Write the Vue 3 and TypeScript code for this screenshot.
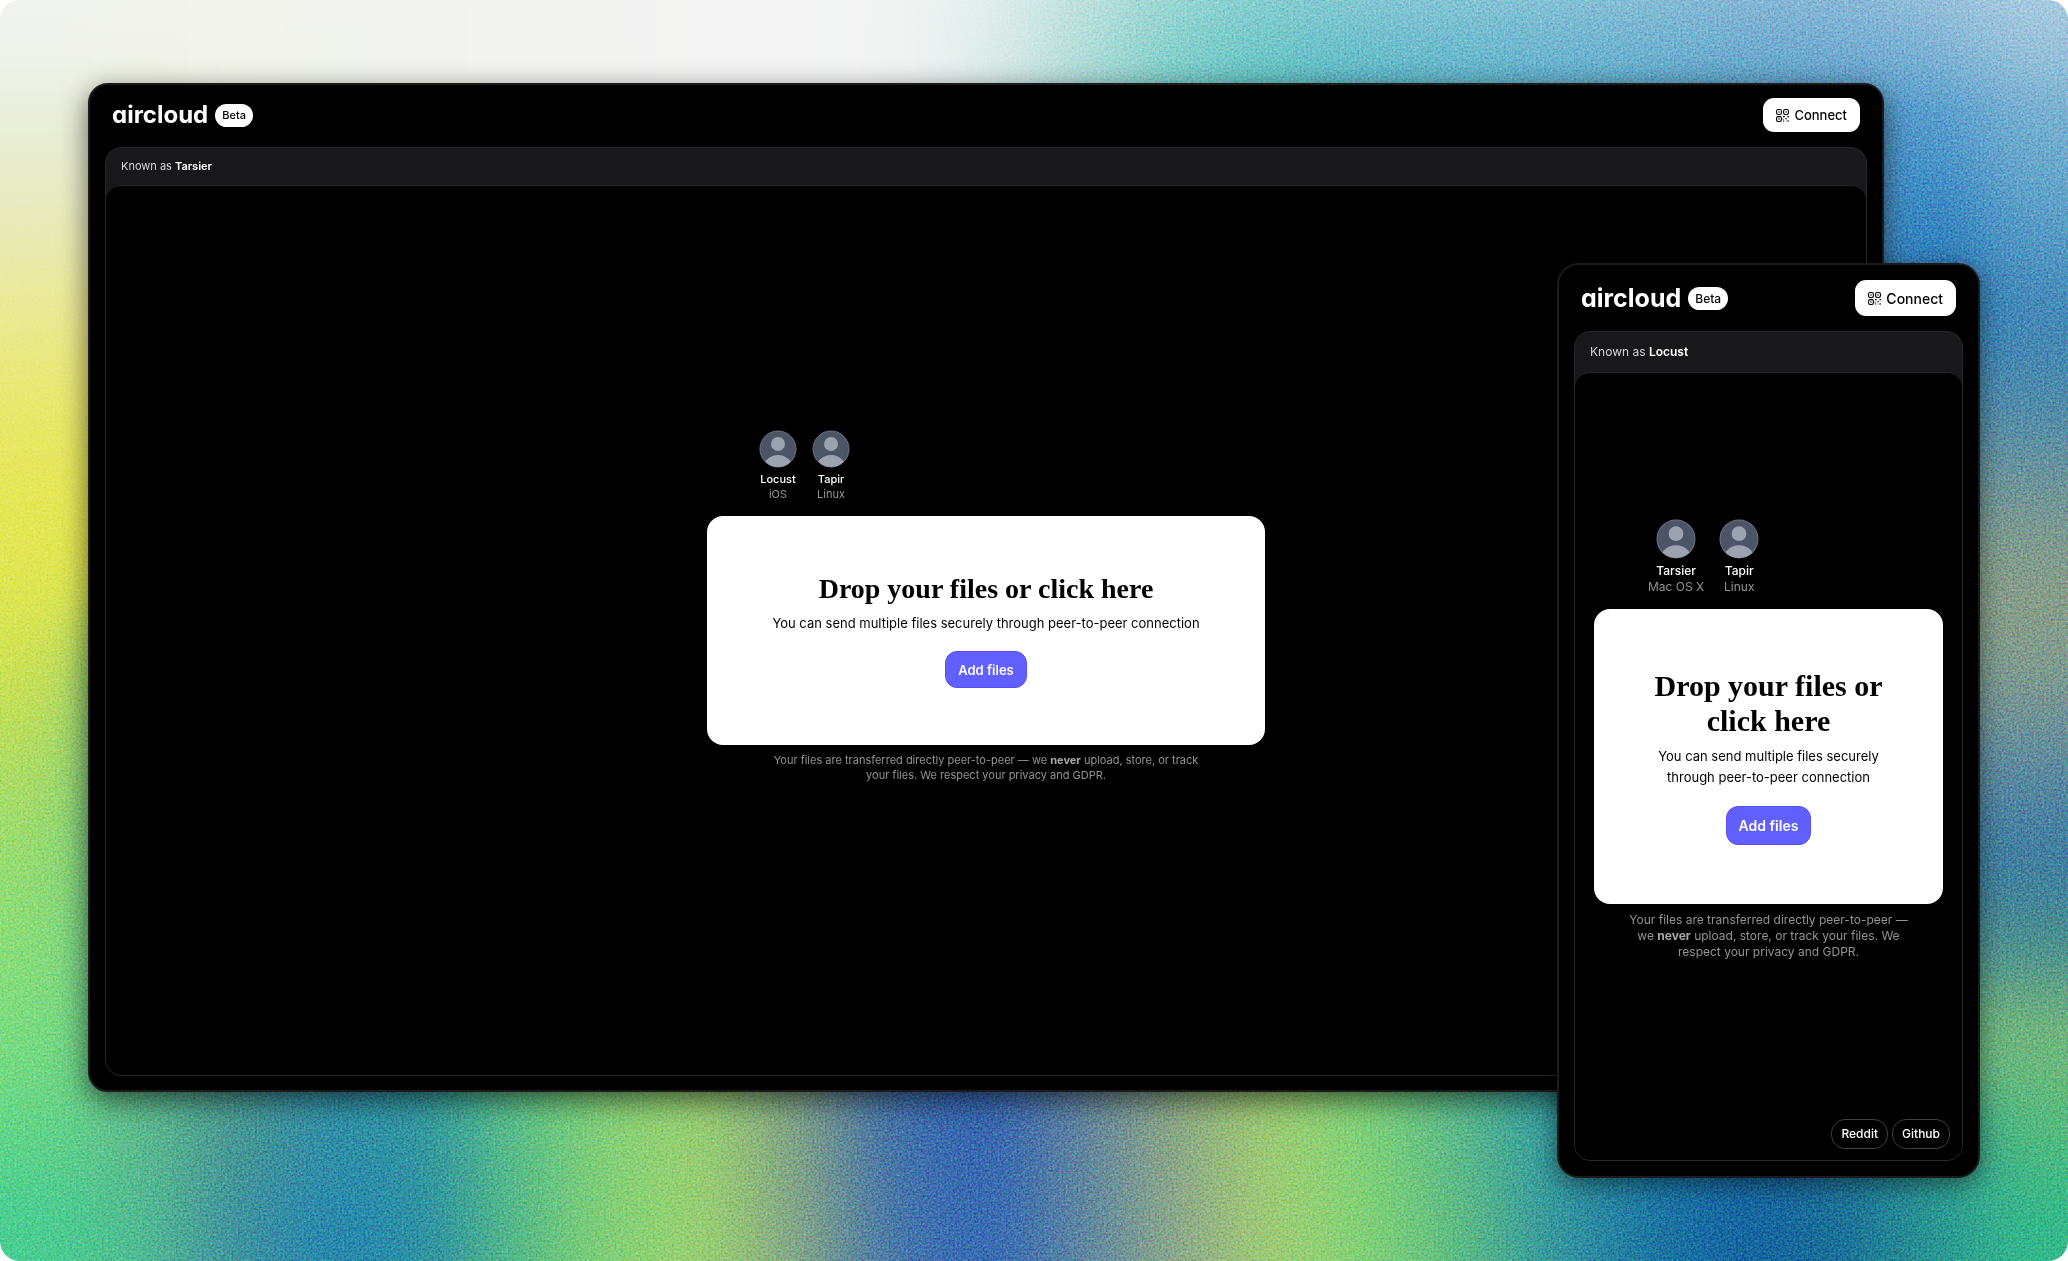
<script setup lang="ts">
interface Peer {
  name: string
  os: string
}

interface AppWindow {
  kind: 'wide' | 'compact'
  alias: string
  peers: Peer[]
  links: string[]
}

interface Cell {
  x: number
  y: number
  width: number
  height: number
  fill: string
}

const windows: AppWindow[] = [
  {
    kind: 'wide',
    alias: 'Tarsier',
    peers: [
      { name: 'Locust', os: 'iOS' },
      { name: 'Tapir', os: 'Linux' },
    ],
    links: [],
  },
  {
    kind: 'compact',
    alias: 'Locust',
    peers: [
      { name: 'Tarsier', os: 'Mac OS X' },
      { name: 'Tapir', os: 'Linux' },
    ],
    links: ['Reddit', 'Github'],
  },
]

/* Wallpaper: a coarse colour mesh that is blurred into a smooth gradient. */
const cols = 22
const rows = 14
const cw = 94
const ch = 90

const top = ['#eff2ec', '#f1f3ea', '#f2f4ea', '#f1f3ec', '#f2f3ee', '#f3f4f0', '#f3f3f2', '#f4f4f4', '#f4f4f4', '#f2f4f3', '#dcebe9', '#a6d8d4', '#6cc8c4', '#50bcc0', '#4fb2c4', '#50aec8', '#52a8c9', '#52a4c9', '#529bc8', '#559bca', '#64a4cf', '#86b8d6']
const bottomA = ['#62d588', '#5bb98e', '#45948f', '#2b8ba8', '#2a94a0', '#58c088', '#84d076', '#98cf70', '#7c9c86', '#3c6cac', '#2c5eb2', '#5d80a0', '#8aa686', '#9ecb70', '#7cd278', '#58b88a', '#309aa0', '#1878a4', '#14689f', '#1a6c9c', '#2a9898', '#50b97c']
const bottomB = ['#44cd92', '#4fbb92', '#3a8fa0', '#2184b0', '#268ca6', '#52ba88', '#82d076', '#99d070', '#82a488', '#4272ac', '#2c64b6', '#5a82a4', '#8ca68c', '#a0cc74', '#80d276', '#5abc84', '#3096a0', '#1874a4', '#105fa2', '#146898', '#239094', '#2fb88c']
const left = ['#eff2ec', '#e8edd6', '#e9ebba', '#eae992', '#e8e86c', '#e5e755', '#dfe64f', '#cce152', '#aedc62', '#96dc70', '#88dd79', '#78dc80', '#62d588', '#44cd92']
const right = ['#86b8d6', '#70acd0', '#559cc8', '#3c84b8', '#4a88ac', '#6f9498', '#869c88', '#7d9890', '#5a88a0', '#3878a4', '#468c90', '#74b87c', '#50b97c', '#2fb88c']
const right2 = ['#64a4cf', '#4694cc', '#2378bf', '#1e70b4']

function colour(c: number, r: number): string {
  if (r === 0) return top[c]
  if (r === rows - 1) return bottomB[c]
  if (r === rows - 2) return bottomA[c]
  if (c === 0) return left[r]
  if (c === cols - 1) return right[r]
  if (c === cols - 2) return right2[r] ?? right[r]
  if (r > 6) return bottomA[c]
  return c === 1 ? left[r] : top[c]
}

const cells: Cell[] = []
for (let r = 0; r < rows; r++) {
  for (let c = 0; c < cols; c++) {
    const x0 = c === 0 ? -300 : c * cw
    const x1 = c === cols - 1 ? cols * cw + 300 : (c + 1) * cw + 1
    const y0 = r === 0 ? -300 : r * ch
    const y1 = r === rows - 1 ? rows * ch + 300 : (r + 1) * ch + 1
    cells.push({ x: x0, y: y0, width: x1 - x0, height: y1 - y0, fill: colour(c, r) })
  }
}
</script>

<template>
  <div class="stage">
    <svg class="wallpaper" viewBox="0 0 2068 1261" preserveAspectRatio="none" aria-hidden="true">
      <defs>
        <filter id="melt" filterUnits="userSpaceOnUse" x="-200" y="-200" width="2468" height="1661" color-interpolation-filters="sRGB">
          <feGaussianBlur stdDeviation="40" />
        </filter>
        <filter id="grain" x="0" y="0" width="100%" height="100%" color-interpolation-filters="sRGB">
          <feTurbulence type="fractalNoise" baseFrequency="0.47" numOctaves="3" seed="11" />
          <feColorMatrix values="1.8 0 0 0 -0.36  0 1.8 0 0 -0.34  0 0 1.8 0 -0.4  0 0 0 0 1" />
        </filter>
        <linearGradient id="calm" x1="0" y1="0" x2="1" y2="0">
          <stop offset="0" stop-color="#000" />
          <stop offset="0.42" stop-color="#000" />
          <stop offset="0.54" stop-color="#fff" />
        </linearGradient>
        <linearGradient id="low" x1="0" y1="0" x2="0" y2="1">
          <stop offset="0.1" stop-color="#fff" stop-opacity="0" />
          <stop offset="0.5" stop-color="#fff" />
        </linearGradient>
        <linearGradient id="sheen" x1="0" y1="0" x2="0" y2="1">
          <stop offset="0" stop-color="#f4f4f4" stop-opacity="0.3" />
          <stop offset="1" stop-color="#f4f4f4" stop-opacity="0" />
        </linearGradient>
        <mask id="grain-area">
          <rect width="2068" height="1261" fill="url(#calm)" />
          <rect width="2068" height="1261" fill="url(#low)" />
        </mask>
      </defs>
      <g filter="url(#melt)">
        <rect v-for="(cell, i) in cells" :key="i" v-bind="cell" />
      </g>
      <rect width="2068" height="110" fill="url(#sheen)" />
      <g mask="url(#grain-area)" class="grain">
        <rect width="2068" height="1261" filter="url(#grain)" />
      </g>
    </svg>

    <section v-for="win in windows" :key="win.kind" class="window" :class="win.kind">
      <header class="bar">
        <span class="logo">aircloud</span>
        <span class="badge">Beta</span>
        <button type="button" class="connect">
          <svg class="qr" viewBox="0 0 24 24" fill="none" stroke="currentColor" stroke-width="2" aria-hidden="true">
            <rect x="1" y="1" width="9" height="9" rx="3" />
            <rect x="14" y="1" width="9" height="9" rx="3" />
            <rect x="1" y="14" width="9" height="9" rx="3" />
            <path d="M4 5.500h3M17 5.500h3M4 18.500h3M13 14h3M21 14h3M17 18h3M13 22h2M13 18v2M21 22h3M18 22h1" />
          </svg>
          Connect
        </button>
      </header>

      <div class="panel">
        <p class="alias">Known as <strong>{{ win.alias }}</strong></p>
        <main class="content">
          <div class="center">
            <ul class="peers">
              <li v-for="peer in win.peers" :key="peer.name" class="peer">
                <svg class="avatar" viewBox="0 0 38 38" aria-hidden="true">
                  <clipPath :id="`disc-${win.kind}-${peer.name}`"><circle cx="19" cy="19" r="18" /></clipPath>
                  <circle cx="19" cy="19" r="18" fill="#4b5566" stroke="#6a7385" stroke-width="1" />
                  <circle cx="19" cy="14" r="7" fill="#9ca3b0" />
                  <circle cx="19" cy="41" r="16" fill="#9ca3b0" :clip-path="`url(#disc-${win.kind}-${peer.name})`" />
                </svg>
                <span class="name">{{ peer.name }}</span>
                <span class="os">{{ peer.os }}</span>
              </li>
            </ul>
            <div class="card">
              <h1 class="title">Drop your files or click here</h1>
              <p class="hint">You can send multiple files securely through peer-to-peer connection</p>
              <button type="button" class="add">Add files</button>
            </div>
            <p class="note">
              Your files are transferred directly peer-to-peer — we <strong>never</strong> upload, store, or track your
              files. We respect your privacy and GDPR.
            </p>
          </div>
          <nav v-if="win.links.length" class="links">
            <a v-for="link in win.links" :key="link" class="link" href="#">{{ link }}</a>
          </nav>
        </main>
      </div>
    </section>
  </div>
</template>

<style>
body {
  margin: 0;
  background: #fff;
}
</style>

<style scoped>
.stage {
  position: relative;
  min-height: 100vh;
  overflow: hidden;
  border-radius: 20px;
  font-family: Inter, "Liberation Sans", sans-serif;
  color: #fff;
}

.wallpaper {
  position: absolute;
  inset: 0;
  width: 100%;
  height: 100%;
}

.grain {
  mix-blend-mode: soft-light;
  opacity: 0.65;
}

.window {
  position: absolute;
  box-sizing: border-box;
  display: flex;
  flex-direction: column;
  border: 2px solid #1c1a1b;
  background: #000;
}

.wide {
  --text: 13px;
  --small: 11px;
  --small-line: 15px;
  --hint-line: 20px;
  --title: 28px;
  --title-line: 32px;
  --logo: 24px;
  --button: 34px;
  --add: 37px;
  --avatar: 38px;
  --card-pad: 57px;
  --peers-indent: 52px;
  --alias-height: 37px;
  --lift: 48px;
  inset: 83px 184px 169px 88px;
  padding: 13px 15px 14px;
  border-radius: 20px;
  box-shadow: 0 8px 28px rgba(0, 0, 0, 0.6);
}

.compact {
  --text: 14px;
  --small: 12px;
  --small-line: 16px;
  --hint-line: 21px;
  --title: 30px;
  --title-line: 35px;
  --logo: 25px;
  --button: 36px;
  --add: 39px;
  --avatar: 40px;
  --card-pad: 59px;
  --peers-indent: 54px;
  --alias-height: 40px;
  --lift: 54px;
  inset: 263px 88px 83px auto;
  width: 423px;
  padding: 15px;
  border-radius: 22px;
  box-shadow: 0 6px 24px rgba(0, 0, 0, 0.5);
}

.bar {
  display: flex;
  align-items: center;
  margin: 0 7px 15px;
}

.logo {
  font-size: var(--logo);
  line-height: 30px;
  font-weight: 700;
  font-feature-settings: "cv11";
}

.badge {
  margin-left: 7px;
  padding: 0 7px;
  border-radius: 12px;
  background: #fff;
  color: #000;
  font-size: var(--small);
  line-height: 23px;
  font-weight: 500;
}

.connect {
  display: flex;
  align-items: center;
  gap: 5px;
  height: var(--button);
  margin-left: auto;
  padding: 0 13px;
  border: 0;
  border-radius: 11px;
  background: #fff;
  color: #000;
  font: 500 var(--text) Inter, sans-serif;
}

.qr {
  width: 13px;
  height: 13px;
}

.panel {
  flex: 1;
  display: flex;
  flex-direction: column;
  border: 1px solid #27272a;
  border-radius: 16px;
  background: #18181b;
}

.alias {
  margin: 0;
  padding: 0 15px;
  color: #d4d4d8;
  font-size: var(--small);
  line-height: var(--alias-height);
}

.alias strong {
  color: #fff;
  font-weight: 600;
}

.content {
  position: relative;
  flex: 1;
  display: flex;
  flex-direction: column;
  align-items: center;
  justify-content: center;
  padding: 0 19px var(--lift);
  border-top: 1px solid #27272a;
  border-radius: 15px;
  background: #000;
}

.center {
  width: 100%;
  max-width: 558px;
}

.peers {
  display: flex;
  gap: 15px;
  margin: 0 0 14px;
  padding: 0 0 0 var(--peers-indent);
  list-style: none;
}

.peer {
  display: flex;
  flex-direction: column;
  align-items: center;
  font-size: var(--small);
  line-height: var(--small-line);
}

.avatar {
  width: var(--avatar);
  height: var(--avatar);
  margin-bottom: 4px;
}

.name {
  font-weight: 500;
}

.os {
  color: #949496;
}

.card {
  display: flex;
  flex-direction: column;
  align-items: center;
  padding: var(--card-pad) 50px;
  border-radius: 16px;
  background: #fff;
  color: #000;
  text-align: center;
}

.title {
  margin: 0;
  font-family: "Liberation Serif", serif;
  font-size: var(--title);
  line-height: var(--title-line);
  font-weight: 700;
}

.hint {
  margin: 8px 0 18px;
  font-size: 13px;
  line-height: var(--hint-line);
}

.add {
  height: var(--add);
  padding: 0 12px;
  border: 1px solid #5750f0;
  border-radius: 12px;
  background: #615fff;
  color: #fff;
  font: 600 var(--text) Inter, sans-serif;
}

.note {
  margin: 8px auto 0;
  max-width: 440px;
  padding: 0 31px;
  color: #949496;
  font-size: var(--small);
  line-height: var(--small-line);
  text-align: center;
}

.note strong {
  color: #a8a8aa;
  font-weight: 700;
}

.links {
  position: absolute;
  right: 12px;
  bottom: 11px;
  display: flex;
  gap: 4px;
}

.link {
  padding: 0 9px;
  border: 1px solid #3f3f46;
  border-radius: 14px;
  color: #fff;
  font-size: var(--small);
  line-height: 28px;
  font-weight: 500;
  text-decoration: none;
}
</style>
